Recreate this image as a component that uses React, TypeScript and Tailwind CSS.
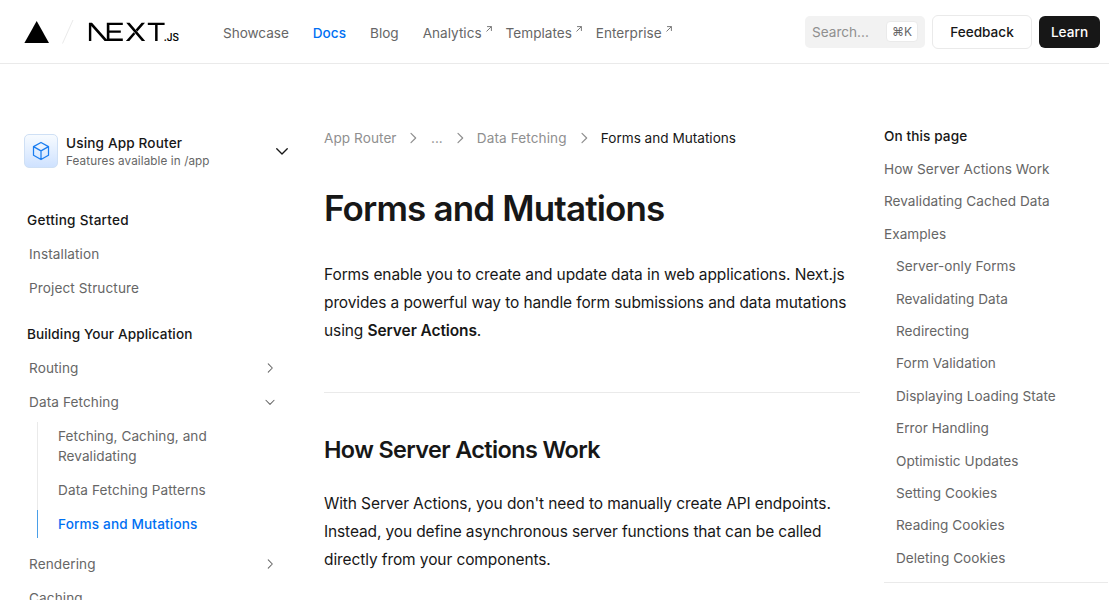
import type { ReactNode } from "react";

function Chevron({ size, down, className = "" }: { size: number; down?: boolean; className?: string }) {
  return (
    <svg
      width={size}
      height={size}
      viewBox="0 0 24 24"
      fill="none"
      stroke="currentColor"
      strokeWidth="1.8"
      strokeLinecap="round"
      strokeLinejoin="round"
      className={`shrink-0 ${className}`}
    >
      <path d={down ? "M5 9l7 7 7-7" : "M9 5l7 7-7 7"} />
    </svg>
  );
}

function ExternalArrow() {
  return (
    <svg width="6" height="6" viewBox="0 0 7 7" fill="none" stroke="#666" strokeWidth="1" className="-mt-[9px] ml-[4px] shrink-0">
      <path d="M1.2 0.7H6.3V5.8M6.3 0.7L0.6 6.4" />
    </svg>
  );
}

function Logo() {
  return (
    <div className="flex items-center">
      <svg width="26" height="24" viewBox="0 0 26 24" className="shrink-0">
        <path d="M12.7 1L25 23H0.4z" fill="#000" />
      </svg>
      <svg width="14" height="26" viewBox="0 0 14 26" className="ml-[11px] shrink-0">
        <path d="M1.5 24.5L12 1" stroke="#eaeaea" strokeWidth="1" fill="none" />
      </svg>
      <svg width="96" height="24" viewBox="0 -2 96 24" className="ml-[12px] shrink-0">
        <path
          d="M1.9 0.8H5L21.2 19H17.6L4.3 4V18.9H1.9zM19.8 0.8H35.8V3.1H22.4V8.5H33.8V10.8H22.4V16.6H35.8V18.9H21.2L19.8 17.4zM39.2 0.8H42.6L58.2 18.9H54.8zM54.6 0.8H58L50.4 9.4L48.7 7.4zM46.6 10.2L48.3 12.1L42.3 18.9H38.9zM60.8 0.8H77.6V3.1H70.6V18.9H68.1V3.1H60.8z"
          fill="#000"
        />
        <text x="76.8" y="18.8" fill="#000" stroke="#000" strokeWidth="0.15" fontSize="10" fontFamily="Inter, sans-serif" fontWeight="500">
          .JS
        </text>
      </svg>
    </div>
  );
}

function NavLink({ children, external, active }: { children: ReactNode; external?: boolean; active?: boolean }) {
  return (
    <a className={`flex items-center ${active ? "font-medium text-[#0070f3]" : "text-[#666]"}`}>
      {children}
      {external && <ExternalArrow />}
    </a>
  );
}

function Header() {
  return (
    <header className="flex h-16 shrink-0 items-center border-b border-[#eaeaea] pl-6 pr-[9px]">
      <Logo />
      <nav className="ml-[40px] flex items-center pt-[3px] text-[13.6px] leading-5">
        <NavLink>
          <span className="tracking-[-0.05px]">Showcase</span>
        </NavLink>
        <span className="w-6" />
        <NavLink active>Docs</NavLink>
        <span className="w-6" />
        <NavLink>Blog</NavLink>
        <span className="w-6" />
        <NavLink external>Analytics</NavLink>
        <span className="w-[14px]" />
        <NavLink external>Templates</NavLink>
        <span className="w-[14px]" />
        <NavLink external>Enterprise</NavLink>
      </nav>
      <div className="ml-auto flex items-center text-[13.6px]">
        <div className="flex h-8 w-[120px] items-center justify-between rounded-[5px] bg-[#f2f2f2] px-[7px] text-[#8f8f8f]">
          <span className="pt-0.5">Search...</span>
          <kbd className="flex h-[21px] w-8 items-center justify-center rounded border border-[#eaeaea] bg-white pt-px font-[Inter,sans-serif] text-xs text-[#666]">
            ⌘K
          </kbd>
        </div>
        <button className="ml-[7px] h-[34px] w-[100px] rounded-md border border-[#eaeaea] bg-white pt-0.5 font-medium text-[#171717]">Feedback</button>
        <button className="ml-[7px] h-8 w-[61px] rounded-md bg-[#171717] pt-0.5 font-medium text-white">Learn</button>
      </div>
    </header>
  );
}

function SideRow({ label, state }: { label: string; state?: "open" | "closed" }) {
  return (
    <div className="flex h-[34px] items-center justify-between pl-[5px] pr-3 text-[#666]">
      <span>{label}</span>
      {state && <Chevron size={14} down={state === "open"} />}
    </div>
  );
}

function Sidebar() {
  return (
    <aside className="w-[265px] shrink-0 pt-[70px] text-[13.6px] leading-5 tracking-[0.1px]">
      <div className="flex h-[34px] items-center">
        <div className="flex size-[34px] items-center justify-center rounded-[5px] border border-[#cfe0f5] bg-linear-to-b from-[#f7fbff] to-[#cfe2ff]">
          <svg width="20" height="20" viewBox="0 0 24 24" fill="none" stroke="#1a7df0" strokeWidth="1.5" strokeLinejoin="round">
            <path d="M12 1.8l9 4.9v10.4l-9 5.1-9-5.1V6.7zM3 6.7l9 5.1 9-5.1M12 11.8v10.4" />
          </svg>
        </div>
        <div className="ml-2 flex flex-col">
          <span className="font-medium leading-[18px] tracking-[0.15px] text-[#171717]">Using App Router</span>
          <span className="-mb-px pt-px text-[11.7px] leading-[17px] text-[#666]">Features available in /app</span>
        </div>
        <Chevron size={18} down className="-mr-[2px] ml-auto text-[#171717]" />
      </div>

      <div className="mt-[35px] flex h-[34px] items-center pl-[3px] font-medium tracking-[0.25px] text-[#171717]">Getting Started</div>
      <SideRow label="Installation" />
      <SideRow label="Project Structure" />
      <div className="mt-3 flex h-[34px] items-center pl-[3px] font-medium tracking-[0.1px] text-[#171717]">Building Your Application</div>
      <SideRow label="Routing" state="closed" />
      <SideRow label="Data Fetching" state="open" />
      <div className="ml-[13px] mt-[3px] flex flex-col text-[#666]">
        <div className="h-[54px] w-[190px] border-l border-[#eaeaea] pl-5 pt-1 tracking-[0.05px]">
          Fetching, Caching, and
          <br />
          Revalidating
        </div>
        <div className="h-[34px] border-l border-[#eaeaea] pl-5 pt-1">Data Fetching Patterns</div>
        <div className="h-7 border-l border-l-[#4a9fe8] pl-5 pt-1 font-medium tracking-[0.14px] text-[#0070f3]">Forms and Mutations</div>
      </div>
      <div className="mt-[9px]">
        <SideRow label="Rendering" state="closed" />
        <SideRow label="Caching" />
      </div>
    </aside>
  );
}

function Article() {
  return (
    <main className="ml-[35px] w-[536px] shrink-0 pt-16 text-[#171717]">
      <div className="flex h-5 items-center text-[13.6px] text-[#8f8f8f]">
        <span className="w-[73px] tracking-[0.06px]">App Router</span>
        <Chevron size={16} className="ml-2 mr-[10px]" />
        <span>...</span>
        <Chevron size={16} className="ml-[9px] mr-[9px]" />
        <span className="w-[90px] tracking-[0.1px]">Data Fetching</span>
        <Chevron size={16} className="ml-[9px] mr-[9px]" />
        <span className="text-[#171717]">Forms and Mutations</span>
      </div>
      <h1 className="mt-[38px] text-[35px] font-semibold leading-[44px] tracking-[-0.85px]">Forms and Mutations</h1>
      <p className="mt-[31px] whitespace-nowrap text-[15.5px] leading-7 tracking-[-0.1px]">
        Forms enable you to create and update data in web applications. Next.js
        <br />
        <span className="tracking-[-0.115px]">provides a powerful way to handle form submissions and data mutations</span>
        <br />
        using <strong className="font-semibold">Server Actions</strong>.
      </p>
      <hr className="mt-[47px] border-[#eaeaea]" />
      <h2 className="mt-[41px] text-[23.4px] font-semibold leading-8 tracking-[-0.6px]">How Server Actions Work</h2>
      <p className="mt-6 whitespace-nowrap text-[15.5px] leading-7 tracking-[-0.1px]">
        With Server Actions, you don't need to manually create API endpoints.
        <br />
        <span className="tracking-[-0.13px]">Instead, you define asynchronous server functions that can be called</span>
        <br />
        directly from your components.
      </p>
    </main>
  );
}

const toc: { label: string; nested?: boolean }[] = [
  { label: "How Server Actions Work" },
  { label: "Revalidating Cached Data" },
  { label: "Examples" },
  { label: "Server-only Forms", nested: true },
  { label: "Revalidating Data", nested: true },
  { label: "Redirecting", nested: true },
  { label: "Form Validation", nested: true },
  { label: "Displaying Loading State", nested: true },
  { label: "Error Handling", nested: true },
  { label: "Optimistic Updates", nested: true },
  { label: "Setting Cookies", nested: true },
  { label: "Reading Cookies", nested: true },
  { label: "Deleting Cookies", nested: true },
];

function TableOfContents() {
  return (
    <aside className="ml-6 w-[224px] shrink-0 pt-[62px] text-[13.6px] leading-5">
      <div className="font-medium tracking-[0.1px] text-[#171717]">On this page</div>
      <ul className="mt-[13px] flex flex-col gap-[12.4px] border-b border-[#eaeaea] pb-[14px] tracking-[0.03px] text-[#666]">
        {toc.map((item) => (
          <li key={item.label} className={item.nested ? "pl-3" : ""}>
            {item.label}
          </li>
        ))}
      </ul>
    </aside>
  );
}

export default function App() {
  return (
    <div className="flex h-[600px] w-[1109px] flex-col overflow-hidden bg-white font-[Inter,'Noto_Sans_CJK_SC',sans-serif] antialiased">
      <Header />
      <div className="flex min-h-0 flex-1 overflow-hidden pl-6">
        <Sidebar />
        <Article />
        <TableOfContents />
      </div>
    </div>
  );
}
